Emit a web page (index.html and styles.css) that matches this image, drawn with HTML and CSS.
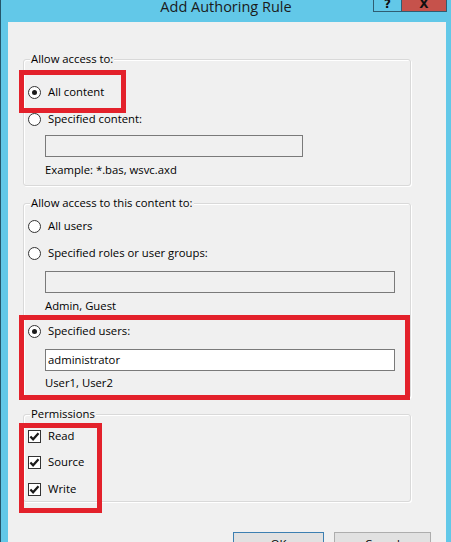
FILE: index.html
```html
<!DOCTYPE html>
<html lang="en">
<head>
<meta charset="utf-8">
<title>Add Authoring Rule</title>
<link rel="stylesheet" href="styles.css">
</head>
<body>
<div class="window">
  <div class="titlebar">
    <div class="title">Add Authoring Rule</div>
    <div class="caption-buttons">
      <div class="cap-btn help"><span>?</span></div>
      <div class="cap-btn close"><span>X</span></div>
    </div>
  </div>
  <div class="client">
    <div class="group group-content">
      <span class="legend">Allow access to:</span>
      <div class="row first"><span class="radio on"></span><span class="label">All content</span></div>
      <div class="row gap7"><span class="radio"></span><span class="label">Specified content:</span></div>
      <div class="field disabled short m6"></div>
      <div class="hint m5">Example: *.bas, wsvc.axd</div>
    </div>

    <div class="group group-users">
      <span class="legend">Allow access to this content to:</span>
      <div class="row"><span class="radio"></span><span class="label">All users</span></div>
      <div class="row gap7"><span class="radio"></span><span class="label">Specified roles or user groups:</span></div>
      <div class="field disabled m8"></div>
      <div class="hint m5">Admin, Guest</div>
      <div class="row gap7"><span class="radio on"></span><span class="label">Specified users:</span></div>
      <div class="field m8">administrator</div>
      <div class="hint m4">User1, User2</div>
    </div>

    <div class="group group-perms">
      <span class="legend">Permissions</span>
      <div class="row"><span class="check"><svg viewBox="0 0 13 13" width="13" height="13"><path d="M2.4 6.4 L5.1 9.3 L10.5 3.2" fill="none" stroke="#1a1a1a" stroke-width="2.2"/></svg></span><span class="label">Read</span></div>
      <div class="row gap6"><span class="check"><svg viewBox="0 0 13 13" width="13" height="13"><path d="M2.4 6.4 L5.1 9.3 L10.5 3.2" fill="none" stroke="#1a1a1a" stroke-width="2.2"/></svg></span><span class="label">Source</span></div>
      <div class="row gap7"><span class="check"><svg viewBox="0 0 13 13" width="13" height="13"><path d="M2.4 6.4 L5.1 9.3 L10.5 3.2" fill="none" stroke="#1a1a1a" stroke-width="2.2"/></svg></span><span class="label">Write</span></div>
    </div>

    <div class="buttons">
      <div class="btn default">OK</div>
      <div class="btn cancel">Cancel</div>
    </div>
  </div>

  <div class="mark mark-all"></div>
  <div class="mark mark-users"></div>
  <div class="mark mark-perms"></div>
</div>
</body>
</html>
```

FILE: styles.css
```css
* { box-sizing: border-box; }

html, body {
  margin: 0;
  padding: 0;
  background: #62c8e8;
}

body {
  width: 451px;
  height: 542px;
  overflow: hidden;
  font-family: "Open Sans", "Noto Sans", sans-serif;
  font-size: 11.3px;
  color: #000;
}

.window {
  position: relative;
  width: 451px;
  height: 542px;
  background: #62c8e8;
  border-left: 1px solid #24566b;
  display: grid;
  grid-template-rows: 22px 1fr;
}

.titlebar {
  display: grid;
  grid-template-columns: 1fr auto 1fr;
  align-items: start;
}

.title {
  grid-column: 2;
  font-size: 14.5px;
  line-height: 15px;
  margin-top: -1px;
  color: #1b1b1b;
  white-space: nowrap;
}

.caption-buttons {
  grid-column: 3;
  justify-self: end;
  display: flex;
  margin-right: 4px;
}

.cap-btn {
  height: 12px;
  overflow: hidden;
  display: flex;
  justify-content: center;
  align-items: flex-start;
  border: 1px solid #2f5d72;
  border-top: none;
  font-family: "DejaVu Sans", sans-serif;
  font-weight: bold;
  font-size: 12px;
  line-height: 9px;
  color: #101010;
}

.cap-btn span { display: block; }

.help {
  width: 28px;
  background: #62c8e8;
  border-right: none;
}

.close {
  width: 46px;
  background: #c6524b;
}

.client {
  margin-left: 7px;
  width: 438px;
  background: #f0f0f0;
  padding: 37px 15px 0 15px;
}

.group {
  position: relative;
  width: 388px;
  border: 1px solid #d9d9d9;
  border-radius: 3px;
  box-shadow: inset 1px 1px 0 #ffffff, 1px 1px 0 #ffffff;
  padding-left: 4px;
}

.legend {
  position: absolute;
  top: -9px;
  left: 6px;
  padding: 0 1px;
  background: #f0f0f0;
  line-height: 16px;
  white-space: nowrap;
}

.group-content { padding-top: 22px; padding-bottom: 7px; }
.group-users { margin-top: 17px; padding-top: 12px; padding-bottom: 6px; }
.group-perms { margin-top: 16px; padding-top: 11px; padding-bottom: 2px; }

.row {
  height: 20px;
  display: flex;
  align-items: center;
  white-space: nowrap;
}

.gap6 { margin-top: 6px; }
.gap7 { margin-top: 7px; }
.m4 { margin-top: 4px; }
.m5 { margin-top: 5px; }
.m6 { margin-top: 6px; }
.m8 { margin-top: 8px; }

.radio {
  position: relative;
  width: 13px;
  height: 13px;
  border: 1px solid #333;
  border-radius: 50%;
  background: #fff;
  flex: none;
}

.radio.on::after {
  content: "";
  position: absolute;
  left: 3px;
  top: 3px;
  width: 5px;
  height: 5px;
  border-radius: 50%;
  background: #1a1a1a;
}

.check {
  width: 13px;
  height: 13px;
  border: 1px solid #333;
  background: #fff;
  flex: none;
  display: flex;
  align-items: center;
  justify-content: center;
}

.check svg { display: block; flex: none; }

.label { margin-left: 7px; line-height: 16px; }

.field {
  margin-left: 17px;
  width: 350px;
  height: 22px;
  border: 1px solid #7a7a7a;
  background: #fff;
  padding-left: 2px;
  line-height: 20px;
}

.field.short { width: 258px; }
.field.disabled { background: #f0f0f0; }

.hint {
  margin-left: 17px;
  line-height: 16px;
}

.buttons {
  margin-top: 30px;
  display: flex;
  justify-content: flex-end;
  gap: 10px;
}

.btn {
  height: 23px;
  background: #e1e1e1;
  border: 1px solid #adadad;
  text-align: center;
  line-height: 21px;
}

.btn.default { width: 91px; border-color: #3c7fb1; }
.btn.cancel { width: 97px; }

.mark {
  position: absolute;
  border: 5px solid #e3212b;
}

.mark-all { left: 18px; top: 70px; width: 107px; height: 43px; }
.mark-users { left: 18px; top: 315px; width: 391px; height: 85px; }
.mark-perms { left: 18px; top: 423px; width: 83px; height: 90px; }
```
